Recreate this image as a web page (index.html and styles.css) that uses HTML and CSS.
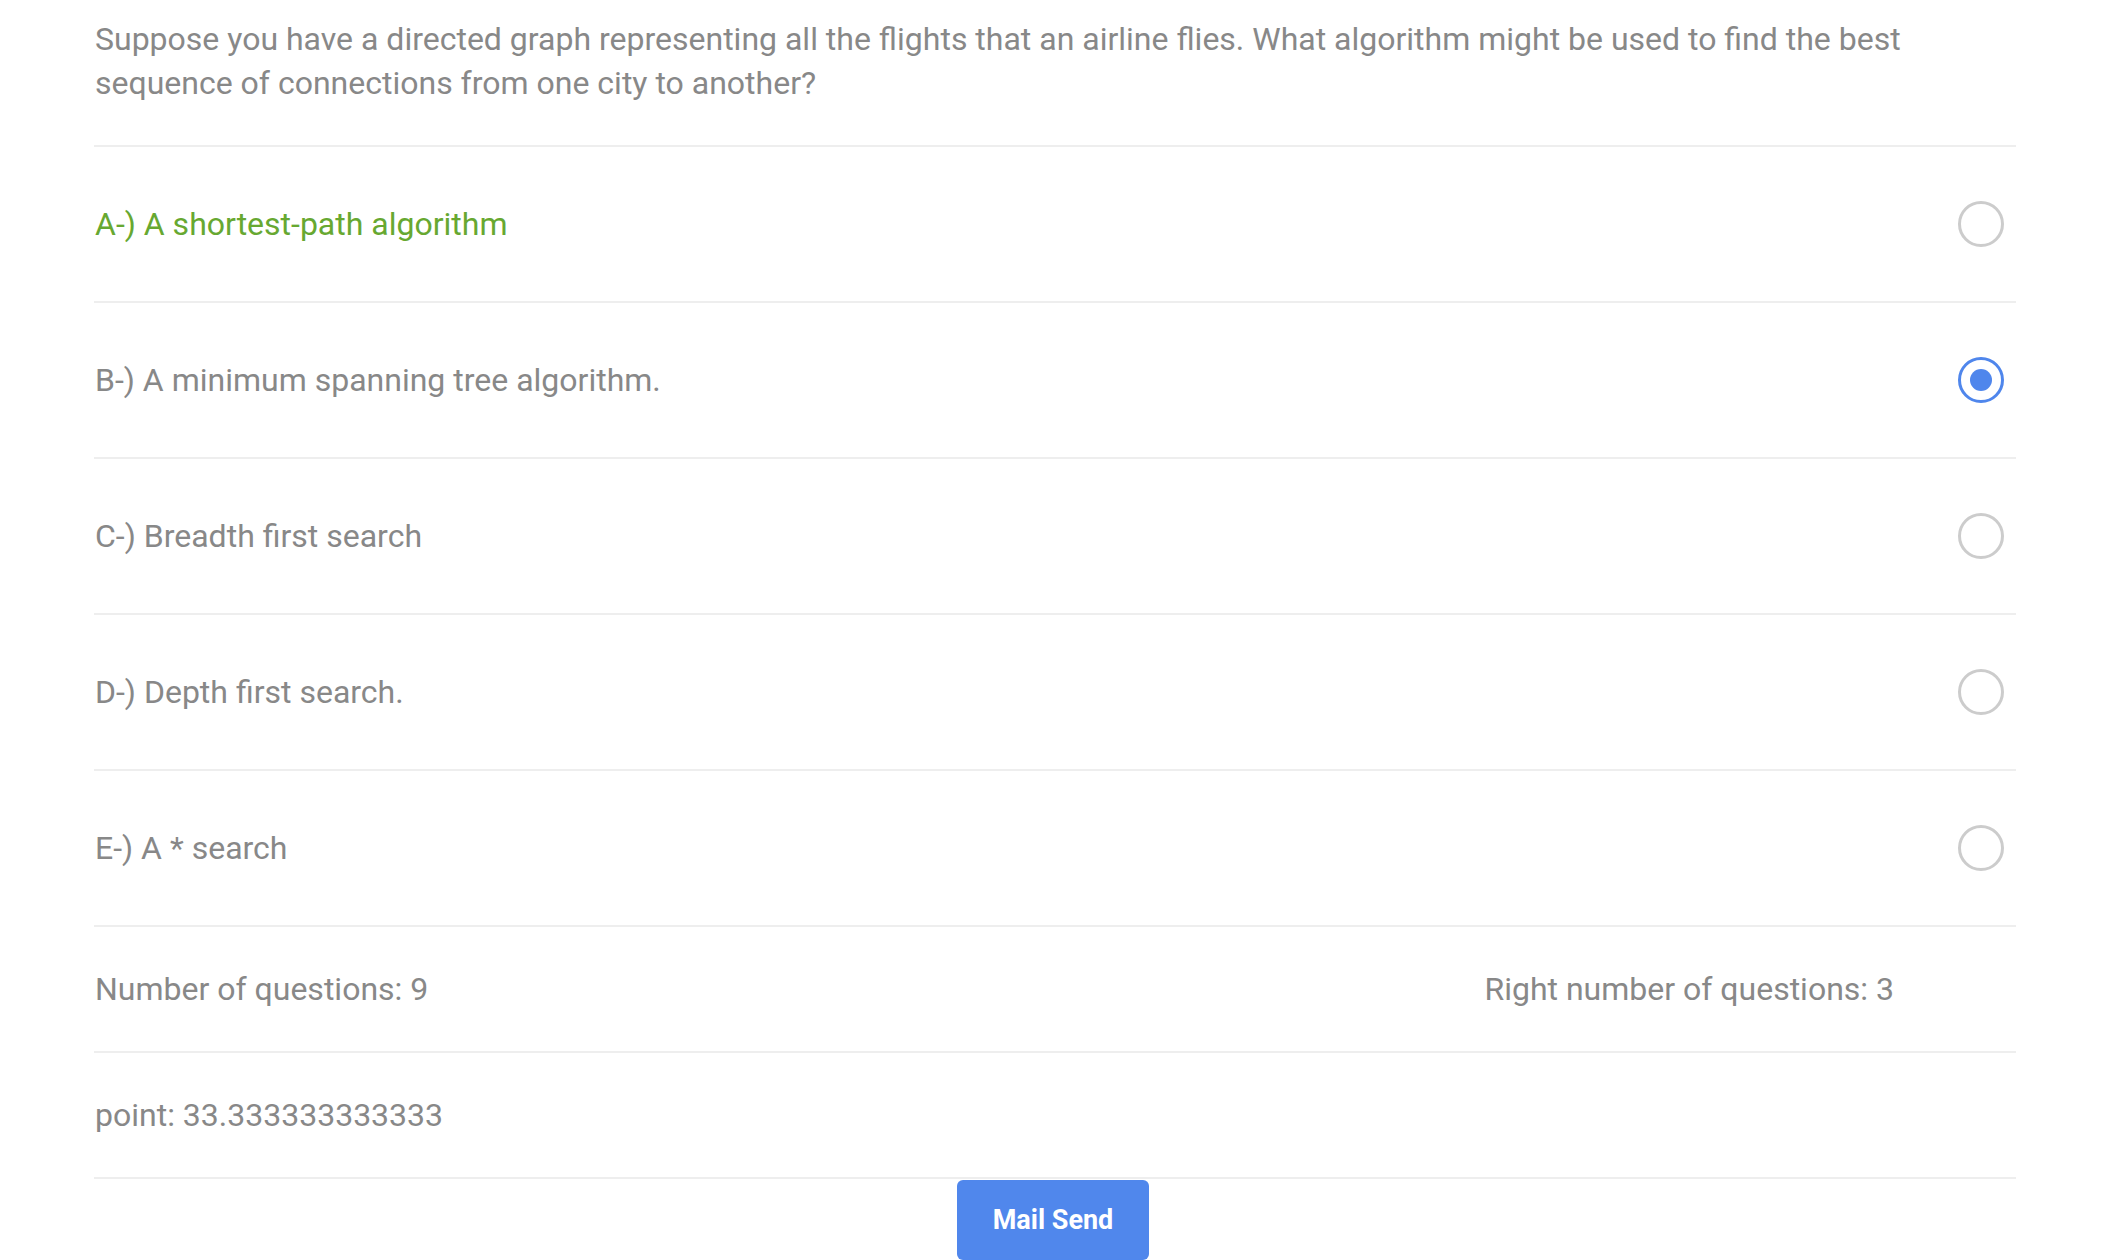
FILE: index.html
```html
<!DOCTYPE html>
<html>
<head>
<meta charset="utf-8">
<link rel="stylesheet" href="styles.css">
</head>
<body>
<div class="quiz">
  <div class="question">Suppose you have a directed graph representing all the flights that an airline flies. What algorithm might be used to find the best sequence of connections from one city to another?</div>
  <div class="option correct"><span>A-) A shortest-path algorithm</span><span class="radio"></span></div>
  <div class="option"><span>B-) A minimum spanning tree algorithm.</span><span class="radio checked"></span></div>
  <div class="option"><span>C-) Breadth first search</span><span class="radio"></span></div>
  <div class="option"><span>D-) Depth first search.</span><span class="radio"></span></div>
  <div class="option"><span>E-) A * search</span><span class="radio"></span></div>
  <div class="stat split"><span>Number of questions: 9</span><span>Right number of questions: 3</span></div>
  <div class="stat"><span>point: 33.333333333333</span></div>
</div>
<div class="actions"><button class="btn">Mail Send</button></div>
</body>
</html>
```

FILE: styles.css
```css
html, body {
  margin: 0;
  padding: 0;
  background: #fff;
}
body {
  font-family: Roboto, "Liberation Sans", sans-serif;
  color: #888888;
  font-size: 32px;
}
.quiz {
  margin-left: 94px;
  width: 1922px;
}
.question {
  box-sizing: border-box;
  height: 147px;
  padding-top: 17px;
  padding-left: 1px;
  line-height: 44px;
  font-size: 32px;
  padding-right: 90px;
  border-bottom: 2px solid #eeeeee;
}
.option {
  box-sizing: border-box;
  height: 156px;
  display: flex;
  align-items: center;
  justify-content: space-between;
  border-bottom: 2px solid #eeeeee;
  padding-left: 1px;
}
.option.correct {
  color: #67a831;
}
.radio {
  box-sizing: border-box;
  width: 46px;
  height: 46px;
  border: 3px solid #cccccc;
  border-radius: 50%;
  margin-right: 12px;
  display: flex;
  align-items: center;
  justify-content: center;
}
.radio.checked {
  border-color: #4f86ec;
}
.radio.checked::after {
  content: "";
  width: 22px;
  height: 22px;
  border-radius: 50%;
  background: #4f86ec;
}
.stat {
  box-sizing: border-box;
  height: 126px;
  display: flex;
  align-items: center;
  border-bottom: 2px solid #eeeeee;
  padding-left: 1px;
}
.stat.split {
  justify-content: space-between;
  padding-right: 122px;
}
.actions {
  display: flex;
  justify-content: center;
  padding-top: 1px;
}
.btn {
  width: 192px;
  height: 80px;
  border: none;
  border-radius: 6px;
  background: #5087ec;
  color: #ffffff;
  font-family: Roboto, "Liberation Sans", sans-serif;
  font-weight: bold;
  font-size: 27px;
  padding: 0;
}
```
